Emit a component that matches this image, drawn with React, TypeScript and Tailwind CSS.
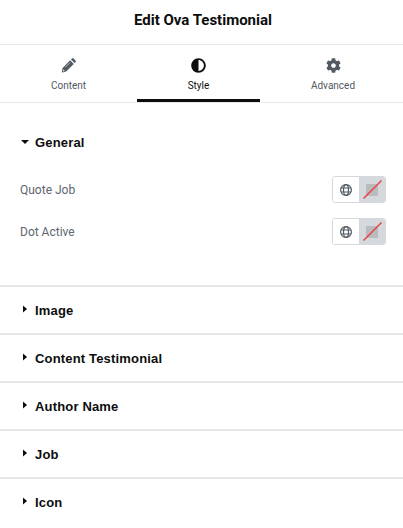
import { FaAdjust, FaCog } from "react-icons/fa"

function Pencil({ className }: { className?: string }) {
  return (
    <svg viewBox="0 0 15 15" fill="currentColor" className={className}>
      <path d="M9.2 2.3l3.6 3.6-7.7 7.7-3.8.9c-.3 0-.5-.2-.5-.5l.8-3.9z" />
      <path d="M10 1.5l.9-.9c.5-.5 1.2-.5 1.7 0l1.9 1.9c.5.5.5 1.2 0 1.7l-.9.9z" />
      <path d="M4.4 9.3l4.7-4.7" stroke="#fff" strokeWidth=".6" />
      <path d="M2.3 11.4l1.5 1.5-1.9.5z" fill="#fff" />
    </svg>
  )
}

const tabs = [
  { label: "Content", icon: Pencil, className: "w-[137px] text-[#515962]", active: false },
  { label: "Style", icon: FaAdjust, className: "w-[123px] text-[#0c0d0e]", active: true },
  { label: "Advanced", icon: FaCog, className: "flex-1 pl-[3px] text-[#515962]", active: false },
]

const controls = ["Quote Job", "Dot Active"]

const sections = ["Image", "Content Testimonial", "Author Name", "Job", "Icon"]

function Globe() {
  return (
    <svg width="12" height="12" viewBox="0 0 12 12" fill="none" stroke="#515962" strokeWidth="1.2">
      <circle cx="6" cy="6" r="5.4" />
      <ellipse cx="6" cy="6" rx="2.5" ry="5.4" />
      <path d="M1 4h10M1 8h10" />
    </svg>
  )
}

function ColorControl({ label }: { label: string }) {
  return (
    <div className="flex h-[27px] items-center justify-between">
      <span className="text-[12px] text-[#5d656f]">{label}</span>
      <div className="flex h-[27px] w-[54px] overflow-hidden rounded-[3px] border border-[#d5d8dc]">
        <button className="flex w-[26px] items-center justify-center bg-white">
          <Globe />
        </button>
        <button className="flex-1 bg-[#d5d8dc]">
          <svg width="26" height="25" viewBox="0 0 26 25" className="block">
            <rect x="7" y="7" width="12" height="12" rx="1" fill="#babbbd" />
            <path d="M4.5 21.5L22.5 3.5" stroke="#ea4040" strokeWidth="1.5" />
          </svg>
        </button>
      </div>
    </div>
  )
}

function SectionTitle({ title, open = false }: { title: string; open?: boolean }) {
  return (
    <div className="flex h-5 items-center">
      <svg width="15" height="10" viewBox="0 0 15 10">
        <path d={open ? "M1 3h8L5 7z" : "M3 .5v7L7 4z"} fill="#0c0d0e" />
      </svg>
      <h2 className="pt-px font-['Liberation_Sans',sans-serif] text-[13px] font-bold tracking-[0.17px] text-[#0c0d0e]">
        {title}
      </h2>
    </div>
  )
}

export default function App() {
  return (
    <div className="h-[528px] w-[403px] overflow-hidden bg-white font-['Roboto',sans-serif]">
      {/* Header */}
      <header className="flex h-[45px] items-center justify-center border-b border-[#e6e8ea] pb-1 pl-[3px]">
        <h1 className="text-[15px] font-bold text-[#0c0d0e]">Edit Ova Testimonial</h1>
      </header>

      {/* Tabs */}
      <nav className="flex h-[58px] border-b border-[#e6e8ea]">
        {tabs.map((tab) => (
          <button
            key={tab.label}
            className={`flex flex-col items-center border-b-[3px] pt-[13px] ${tab.className} ${
              tab.active ? "border-[#0c0d0e]" : "border-transparent"
            }`}
          >
            <tab.icon className="h-[15px] w-[15px]" />
            <span className="mt-[5px] text-[10px] leading-4">{tab.label}</span>
          </button>
        ))}
      </nav>

      {/* Open section */}
      <section className="h-[182px] pl-5 pr-[17px] pt-[29px]">
        <SectionTitle title="General" open />
        <div className="mt-6 flex flex-col gap-[15px]">
          {controls.map((label) => (
            <ColorControl key={label} label={label} />
          ))}
        </div>
      </section>

      {/* Collapsed sections */}
      {sections.map((title) => (
        <section key={title} className="flex h-12 items-center border-t-2 border-[#e6e6e6] px-5">
          <SectionTitle title={title} />
        </section>
      ))}
    </div>
  )
}
